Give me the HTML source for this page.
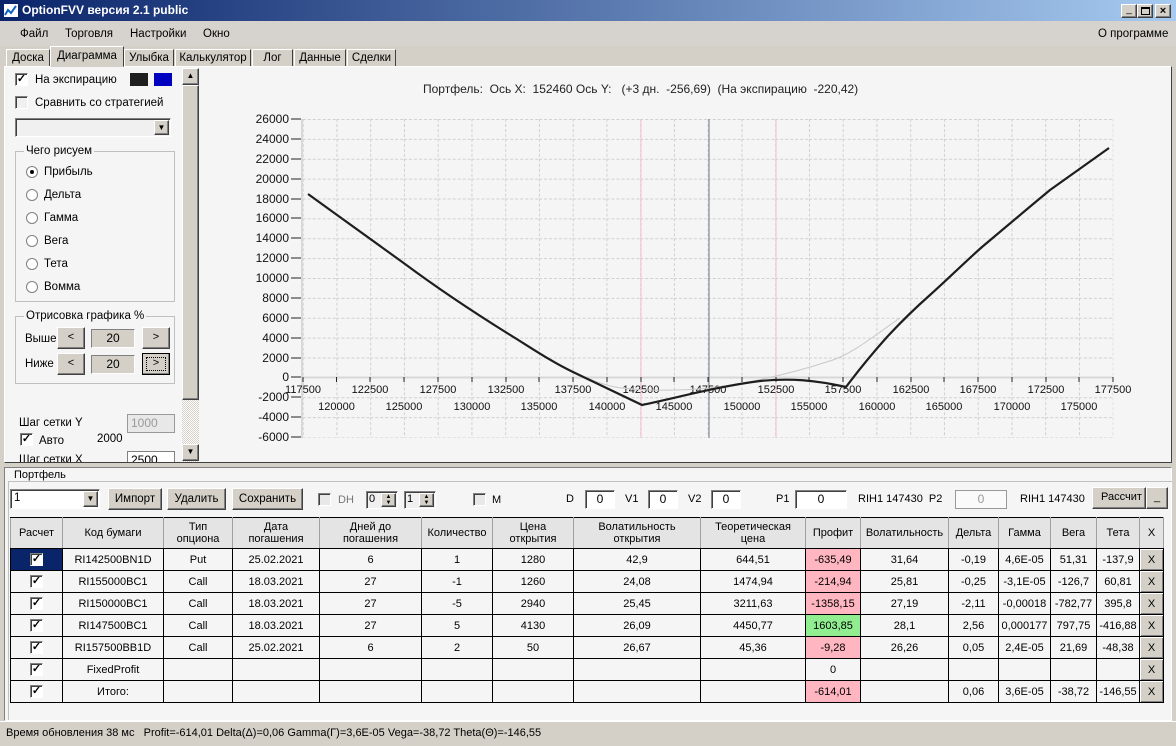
<!DOCTYPE html>
<html><head><meta charset="utf-8"><style>
*{box-sizing:border-box;margin:0;padding:0}
body{width:1176px;height:746px;overflow:hidden;background:#d4d0c8;font-family:"Liberation Sans",sans-serif;font-size:11px;color:#000;position:relative}
.a{position:absolute}
.title{left:0;top:0;width:1176px;height:21px;background:linear-gradient(90deg,#0a246a,#a6caf0);color:#fff;font-weight:bold;font-size:12px;line-height:21px;padding-left:22px}
.btn{background:#d4d0c8;border:1px solid;border-color:#fff #404040 #404040 #fff;box-shadow:inset -1px -1px #808080;text-align:center}
.sunk{background:#fff;border:1px solid;border-color:#808080 #fff #fff #808080;box-shadow:inset 1px 1px #404040}
.tab{top:49px;height:18px;border:1px solid;border-color:#fff #404040 transparent #fff;line-height:16px;text-align:center;font-size:11.5px;background:#d4d0c8}
.cb{width:13px;height:13px;border:1px solid;border-color:#808080 #fff #fff #808080;box-shadow:inset 1px 1px #404040;background:#fff;font-size:11px;line-height:10px;text-align:center;font-weight:bold}
.rd{width:12px;height:12px;border-radius:50%;border:1px solid #808080;background:#fff}
table{border-collapse:collapse;table-layout:fixed;position:absolute;left:10px;top:517px;width:1153px;background:#f5f5f5}
td{border:1px solid #000;text-align:center;height:22px;font-size:11px;white-space:nowrap;overflow:hidden;padding:0}
th{border:1px solid #000;border-color:#000 #a0a0a0 #000 #a0a0a0;background:#e4e4e4;font-weight:normal;height:31px;font-size:11px;line-height:12px}
.r{background:#ffb6c1}.g{background:#90ee90}
.x{background:#d4d0c8;border:1px solid #000;box-shadow:inset 1px 1px #fff,inset -1px -1px #808080}
</style></head><body>
<div class="a title">OptionFVV версия 2.1 public</div>
<div class="a" style="left:3px;top:3px;width:16px;height:15px;background:#fff;border:1px solid #0a246a"><svg width="14" height="13"><path d="M1 11 L4 6 L7 9 L12 2" stroke="#0a64c8" stroke-width="2" fill="none"/></svg></div>
<div class="a btn" style="left:1121px;top:4px;width:16px;height:14px;font-size:10px;line-height:10px">_</div>
<div class="a btn" style="left:1137px;top:4px;width:16px;height:14px"><div style="margin:2px 3px;width:9px;height:8px;border:1px solid #000;border-top-width:2px"></div></div>
<div class="a btn" style="left:1155px;top:4px;width:16px;height:14px;font-weight:bold;line-height:12px">×</div>
<div class="a" style="left:0;top:21px;width:1176px;height:25px;background:#d6d3ce;font-size:11.5px;line-height:26px">
<span class="a" style="left:20px">Файл</span><span class="a" style="left:65px">Торговля</span><span class="a" style="left:130px">Настройки</span><span class="a" style="left:203px">Окно</span><span class="a" style="left:1098px">О программе</span></div>
<div class="a tab" style="left:6px;width:44px">Доска</div>
<div class="a tab" style="left:50px;top:46px;height:21px;width:74px;line-height:19px;z-index:2">Диаграмма</div>
<div class="a tab" style="left:124px;width:50px">Улыбка</div>
<div class="a tab" style="left:175px;width:76px">Калькулятор</div>
<div class="a tab" style="left:252px;width:41px">Лог</div>
<div class="a tab" style="left:294px;width:52px">Данные</div>
<div class="a tab" style="left:347px;width:49px">Сделки</div>
<div class="a" style="left:4px;top:66px;width:1168px;height:397px;border:1px solid;border-color:#fff #404040 #404040 #fff;background:#f5f5f5"></div>
<div class="a" style="left:8px;top:68px;width:174px;height:394px;background:#f5f5f5"></div>
<div class="a cb" style="left:15px;top:73px">✓</div><div class="a" style="left:35px;top:74px;font-size:11.5px">На экспирацию</div>
<div class="a" style="left:130px;top:73px;width:18px;height:13px;background:#1e1e1e"></div>
<div class="a" style="left:154px;top:73px;width:18px;height:13px;background:#0000c0"></div>
<div class="a cb" style="left:15px;top:96px;background:#f0f0f0"></div><div class="a" style="left:35px;top:97px;font-size:11.5px">Сравнить со стратегией</div>
<div class="a sunk" style="left:15px;top:118px;width:156px;height:19px;background:#f0f0f0"></div>
<div class="a btn" style="left:154px;top:120px;width:15px;height:15px;font-size:8px;line-height:13px">▼</div>
<div class="a" style="left:15px;top:151px;width:160px;height:151px;border:1px solid #c0c0c0"></div>
<div class="a" style="left:24px;top:145px;background:#f5f5f5;padding:0 2px;font-size:11.5px">Чего рисуем</div>
<div class="a rd" style="left:26px;top:166px"><div style="width:4px;height:4px;background:#000;border-radius:50%;margin:3px"></div></div><div class="a" style="left:44px;top:166px;font-size:11.5px">Прибыль</div>
<div class="a rd" style="left:26px;top:189px"></div><div class="a" style="left:44px;top:189px;font-size:11.5px">Дельта</div>
<div class="a rd" style="left:26px;top:212px"></div><div class="a" style="left:44px;top:212px;font-size:11.5px">Гамма</div>
<div class="a rd" style="left:26px;top:235px"></div><div class="a" style="left:44px;top:235px;font-size:11.5px">Вега</div>
<div class="a rd" style="left:26px;top:258px"></div><div class="a" style="left:44px;top:258px;font-size:11.5px">Тета</div>
<div class="a rd" style="left:26px;top:281px"></div><div class="a" style="left:44px;top:281px;font-size:11.5px">Вомма</div>
<div class="a" style="left:15px;top:316px;width:160px;height:68px;border:1px solid #c0c0c0"></div>
<div class="a" style="left:24px;top:310px;background:#f5f5f5;padding:0 2px;font-size:11.5px">Отрисовка графика %</div>
<div class="a" style="left:25px;top:333px;font-size:11.5px">Выше</div>
<div class="a btn" style="left:57px;top:327px;width:28px;height:22px;line-height:18px">&lt;</div>
<div class="a" style="left:91px;top:329px;width:44px;height:19px;border:1px solid;border-color:#808080 #fff #fff #808080;background:#d4d0c8;text-align:center;line-height:17px;font-size:12px">20</div>
<div class="a btn" style="left:142px;top:327px;width:28px;height:22px;line-height:18px">&gt;</div>
<div class="a" style="left:25px;top:358px;font-size:11.5px">Ниже</div>
<div class="a btn" style="left:57px;top:353px;width:28px;height:22px;line-height:18px">&lt;</div>
<div class="a" style="left:91px;top:355px;width:44px;height:19px;border:1px solid;border-color:#808080 #fff #fff #808080;background:#d4d0c8;text-align:center;line-height:17px;font-size:12px">20</div>
<div class="a btn" style="left:142px;top:353px;width:28px;height:22px;line-height:18px;border:1px solid #000;outline:1px dotted #000;outline-offset:-5px">&gt;</div>
<div class="a" style="left:19px;top:417px;font-size:11.5px">Шаг сетки Y</div>
<div class="a" style="left:127px;top:414px;width:48px;height:19px;border:1px solid #999;background:#e8e8e8;color:#999;font-size:12px;padding-left:3px;line-height:17px">1000</div>
<div class="a cb" style="left:20px;top:433px">✓</div><div class="a" style="left:39px;top:435px;font-size:11.5px">Авто</div><div class="a" style="left:97px;top:433px;font-size:11.5px">2000</div>
<div class="a" style="left:19px;top:452px;height:10px;overflow:hidden;font-size:11.5px;line-height:17px">Шаг сетки X</div>
<div class="a" style="left:127px;top:451px;width:48px;height:11px;overflow:hidden;border:1px solid #808080;border-bottom:none;background:#fff;font-size:12px;padding-left:3px;line-height:17px">2500</div>
<div class="a" style="left:182px;top:68px;width:17px;height:394px;background:repeating-conic-gradient(#fff 0 25%,#d4d0c8 0 50%) 0 0/2px 2px"></div>
<div class="a btn" style="left:182px;top:68px;width:17px;height:17px;font-size:8px;line-height:14px">▲</div>
<div class="a btn" style="left:182px;top:85px;width:17px;height:315px"></div>
<div class="a btn" style="left:182px;top:444px;width:17px;height:17px;font-size:8px;line-height:14px">▼</div>
<div class="a" style="left:423px;top:82px;font-size:12px;color:#222">Портфель:&nbsp; Ось X:&nbsp; 152460 Ось Y:&nbsp; &nbsp;(+3 дн.&nbsp; -256,69)&nbsp; (На экспирацию&nbsp; -220,42)</div>
<svg class="a" style="left:0;top:0" width="1176" height="746" font-family="Liberation Sans, sans-serif" font-size="12">
<defs><pattern id="gp" x="302.7" y="119" width="33.75" height="19.875" patternUnits="userSpaceOnUse">
<line x1="0.5" y1="0" x2="0.5" y2="19.875" stroke="#d0d0d0" stroke-dasharray="3,2"/>
<line x1="0" y1="0.5" x2="33.75" y2="0.5" stroke="#d0d0d0" stroke-dasharray="3,2"/></pattern></defs>
<rect x="302.7" y="119" width="810.5" height="318.5" fill="url(#gp)"/>
<line x1="302" y1="119" x2="302" y2="438" stroke="#d8d8d8" stroke-width="2"/>
<line x1="302" y1="377.5" x2="1113" y2="377.5" stroke="#d8d8d8" stroke-width="2"/>
<line x1="641" y1="119" x2="641" y2="438" stroke="#f4c0c8"/>
<line x1="776" y1="119" x2="776" y2="438" stroke="#f4c0c8"/>
<line x1="709" y1="119" x2="709" y2="438" stroke="#707888"/>
<g stroke="#222">
<path d="M291 119h10M291 139h10M291 159h10M291 179h10M291 199h10M291 218h10M291 238h10M291 258h10M291 278h10M291 298h10M291 318h10M291 338h10M291 358h10M291 377h10M291 397h10M291 417h10M291 437h10"/>
<path d="M303 377v5M336.5 377v5M370 377v5M404 377v5M438 377v5M472 377v5M506 377v5M539 377v5M573 377v5M607 377v5M641 377v5M674 377v5M708 377v5M742 377v5M776 377v5M809 377v5M843 377v5M877 377v5M911 377v5M944 377v5M978 377v5M1012 377v5M1046 377v5M1079 377v5M1113 377v5"/></g>
<g text-anchor="end" fill="#111">
<text x="289" y="123">26000</text><text x="289" y="143">24000</text><text x="289" y="163">22000</text><text x="289" y="183">20000</text><text x="289" y="203">18000</text><text x="289" y="222">16000</text><text x="289" y="242">14000</text><text x="289" y="262">12000</text><text x="289" y="282">10000</text><text x="289" y="302">8000</text><text x="289" y="322">6000</text><text x="289" y="342">4000</text><text x="289" y="362">2000</text><text x="289" y="381">0</text><text x="289" y="401">-2000</text><text x="289" y="421">-4000</text><text x="289" y="441">-6000</text></g>
<g text-anchor="middle" fill="#111" font-size="11">
<text x="303" y="393">117500</text><text x="370" y="393">122500</text><text x="438" y="393">127500</text><text x="506" y="393">132500</text><text x="573" y="393">137500</text><text x="641" y="393">142500</text><text x="708" y="393">147500</text><text x="776" y="393">152500</text><text x="843" y="393">157500</text><text x="911" y="393">162500</text><text x="978" y="393">167500</text><text x="1046" y="393">172500</text><text x="1113" y="393">177500</text>
<text x="336.5" y="410">120000</text><text x="404" y="410">125000</text><text x="472" y="410">130000</text><text x="539" y="410">135000</text><text x="607" y="410">140000</text><text x="674" y="410">145000</text><text x="742" y="410">150000</text><text x="809" y="410">155000</text><text x="877" y="410">160000</text><text x="944" y="410">165000</text><text x="1012" y="410">170000</text><text x="1079" y="410">175000</text></g>
<path d="M540 353 C565 368 590 382 615 387 C640 391 680 391 710 388 C750 383 790 374 833 360 C855 352 875 335 900 318" stroke="#c8c8c8" fill="none"/>
<path d="M308 194 C340 217 370 239 405 264 C440 290 475 313 507 333 C530 347 550 361 573 372 L642 405 C680 397 720 386 760 381 C790 378 815 380 846 387 C855 375 870 356 887 337 C900 323 913 310 930 295 C948 279 965 262 982 247 C1000 232 1015 219 1050 190 L1109 148" stroke="#1e1e1e" stroke-width="2.2" fill="none" stroke-linejoin="round"/>
</svg>
<div class="a" style="left:4px;top:467px;width:1168px;height:254px;border:1px solid;border-color:#808080 #fff #fff #808080;background:#f5f5f5"></div>
<div class="a" style="left:8px;top:481px;width:1164px;height:239px;border:1px solid #c0c0c0;border-right:none;border-bottom:none"></div>
<div class="a" style="left:12px;top:469px;background:#f5f5f5;padding:0 2px;font-size:11px">Портфель</div>
<div class="a sunk" style="left:10px;top:489px;width:90px;height:20px;padding-left:3px;line-height:17px;font-size:11.5px">1</div>
<div class="a btn" style="left:83px;top:491px;width:15px;height:16px;font-size:8px;line-height:14px">▼</div>
<div class="a btn" style="left:108px;top:488px;width:54px;height:22px;line-height:20px;font-size:11.5px">Импорт</div>
<div class="a btn" style="left:167px;top:488px;width:59px;height:22px;line-height:20px;font-size:11.5px">Удалить</div>
<div class="a btn" style="left:232px;top:488px;width:71px;height:22px;line-height:20px;font-size:11.5px">Сохранить</div>
<div class="a cb" style="left:318px;top:493px;background:#e8e8e8"></div><div class="a" style="left:338px;top:494px;color:#777">DH</div>
<div class="a sunk" style="left:366px;top:491px;width:32px;height:18px;padding-left:2px;font-size:11px;line-height:15px;background:#f0f0f0">0</div><div class="a btn" style="left:381px;top:493px;width:15px;height:14px;font-size:6px;line-height:6px">▲<br>▼</div>
<div class="a sunk" style="left:404px;top:491px;width:32px;height:18px;padding-left:2px;font-size:11px;line-height:15px;background:#f0f0f0">1</div><div class="a btn" style="left:419px;top:493px;width:15px;height:14px;font-size:6px;line-height:6px">▲<br>▼</div>
<div class="a cb" style="left:473px;top:493px;background:#e8e8e8"></div><div class="a" style="left:492px;top:494px">M</div>
<div class="a" style="left:566px;top:493px">D</div><div class="a sunk" style="left:585px;top:490px;width:30px;height:19px;text-align:center;line-height:16px;font-size:12px">0</div>
<div class="a" style="left:625px;top:493px">V1</div><div class="a sunk" style="left:648px;top:490px;width:30px;height:19px;text-align:center;line-height:16px;font-size:12px">0</div>
<div class="a" style="left:688px;top:493px">V2</div><div class="a sunk" style="left:711px;top:490px;width:30px;height:19px;text-align:center;line-height:16px;font-size:12px">0</div>
<div class="a" style="left:776px;top:493px">P1</div><div class="a sunk" style="left:795px;top:490px;width:52px;height:19px;text-align:center;line-height:16px;font-size:12px">0</div>
<div class="a" style="left:858px;top:493px">RIH1 147430&nbsp; P2</div><div class="a" style="left:955px;top:490px;width:52px;height:19px;border:1px solid #999;text-align:center;line-height:16px;font-size:12px;color:#999;background:#fafafa">0</div>
<div class="a" style="left:1020px;top:493px">RIH1 147430</div>
<div class="a btn" style="left:1092px;top:487px;width:54px;height:22px;line-height:18px;overflow:hidden;text-align:left;padding-left:8px">Рассчит</div>
<div class="a btn" style="left:1146px;top:487px;width:22px;height:22px;line-height:18px">_</div>
<table>
<colgroup><col style="width:52px"><col style="width:101px"><col style="width:69px"><col style="width:87px"><col style="width:102px"><col style="width:71px"><col style="width:81px"><col style="width:127px"><col style="width:105px"><col style="width:55px"><col style="width:88px"><col style="width:50px"><col style="width:52px"><col style="width:46px"><col style="width:43px"><col style="width:24px"></colgroup>
<tr><th>Расчет</th><th>Код бумаги</th><th>Тип<br>опциона</th><th>Дата<br>погашения</th><th>Дней до<br>погашения</th><th>Количество</th><th>Цена<br>открытия</th><th>Волатильность<br>открытия</th><th>Теоретическая<br>цена</th><th>Профит</th><th>Волатильность</th><th>Дельта</th><th>Гамма</th><th>Вега</th><th>Тета</th><th>X</th></tr>
<tr><td style="background:#0a246a"><span class="cb" style="display:inline-block">✓</span></td><td>RI142500BN1D</td><td>Put</td><td>25.02.2021</td><td>6</td><td>1</td><td>1280</td><td>42,9</td><td>644,51</td><td class="r">-635,49</td><td>31,64</td><td>-0,19</td><td>4,6E-05</td><td>51,31</td><td>-137,9</td><td class="x">X</td></tr>
<tr><td><span class="cb" style="display:inline-block">✓</span></td><td>RI155000BC1</td><td>Call</td><td>18.03.2021</td><td>27</td><td>-1</td><td>1260</td><td>24,08</td><td>1474,94</td><td class="r">-214,94</td><td>25,81</td><td>-0,25</td><td>-3,1E-05</td><td>-126,7</td><td>60,81</td><td class="x">X</td></tr>
<tr><td><span class="cb" style="display:inline-block">✓</span></td><td>RI150000BC1</td><td>Call</td><td>18.03.2021</td><td>27</td><td>-5</td><td>2940</td><td>25,45</td><td>3211,63</td><td class="r">-1358,15</td><td>27,19</td><td>-2,11</td><td>-0,00018</td><td>-782,77</td><td>395,8</td><td class="x">X</td></tr>
<tr><td><span class="cb" style="display:inline-block">✓</span></td><td>RI147500BC1</td><td>Call</td><td>18.03.2021</td><td>27</td><td>5</td><td>4130</td><td>26,09</td><td>4450,77</td><td class="g">1603,85</td><td>28,1</td><td>2,56</td><td>0,000177</td><td>797,75</td><td>-416,88</td><td class="x">X</td></tr>
<tr><td><span class="cb" style="display:inline-block">✓</span></td><td>RI157500BB1D</td><td>Call</td><td>25.02.2021</td><td>6</td><td>2</td><td>50</td><td>26,67</td><td>45,36</td><td class="r">-9,28</td><td>26,26</td><td>0,05</td><td>2,4E-05</td><td>21,69</td><td>-48,38</td><td class="x">X</td></tr>
<tr><td><span class="cb" style="display:inline-block">✓</span></td><td>FixedProfit</td><td></td><td></td><td></td><td></td><td></td><td></td><td></td><td>0</td><td></td><td></td><td></td><td></td><td></td><td class="x">X</td></tr>
<tr><td><span class="cb" style="display:inline-block">✓</span></td><td>Итого:</td><td></td><td></td><td></td><td></td><td></td><td></td><td></td><td class="r">-614,01</td><td></td><td>0,06</td><td>3,6E-05</td><td>-38,72</td><td>-146,55</td><td class="x">X</td></tr>
</table>
<div class="a" style="left:0;top:721px;width:1176px;height:25px;background:#d4d0c8;border-top:1px solid #fff;padding-left:6px;line-height:22px;font-size:11px">Время обновления 38 мс&nbsp;&nbsp; Profit=-614,01 Delta(Δ)=0,06 Gamma(Γ)=3,6E-05 Vega=-38,72 Theta(Θ)=-146,55</div>
</body></html>
